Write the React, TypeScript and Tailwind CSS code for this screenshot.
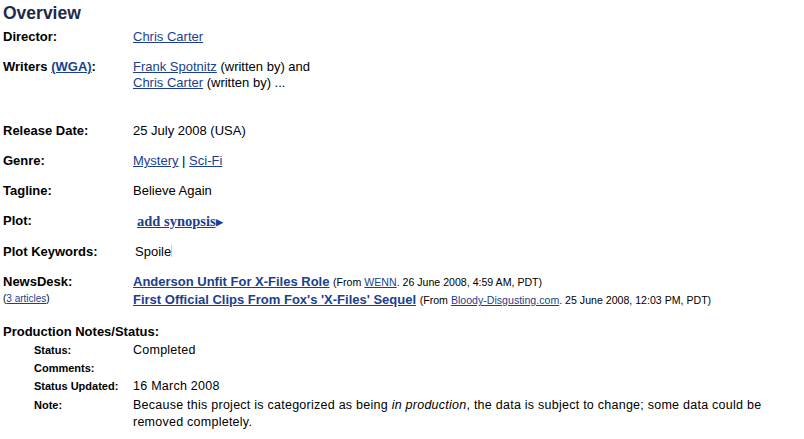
import React from 'react';

const link = 'text-[#1a3f8f] underline';

function Row({
	label,
	children,
	className = '',
}: {
	label: React.ReactNode;
	children?: React.ReactNode;
	className?: string;
}) {
	return (
		<div className={`flex leading-[16px] ${className}`}>
			<div className="w-[130px] shrink-0 font-bold">{label}</div>
			<div className="flex-1">{children}</div>
		</div>
	);
}

function SubRow({
	label,
	children,
	className = '',
}: {
	label: string;
	children?: React.ReactNode;
	className?: string;
}) {
	return (
		<div className={`flex leading-[17px] ${className}`}>
			<div className="w-[130px] shrink-0 pl-[31px] text-[11px] font-bold">
				{label}
			</div>
			<div className="w-[645px] text-[12.5px] tracking-[0.25px]">{children}</div>
		</div>
	);
}

export default function App() {
	return (
		<div className="min-h-screen bg-white pl-[3px] pt-[3px] font-['Liberation_Sans',Arial,sans-serif] text-[13px] text-black">
			<h2 className="text-[17.5px] font-bold leading-[21px] text-[#1f2a48]">
				Overview
			</h2>

			<Row label="Director:" className="mt-[5px]">
				<a className={link}>Chris Carter</a>
			</Row>

			<Row
				label={
					<>
						Writers <a className={link}>(WGA)</a>:
					</>
				}
				className="mt-[14px]"
			>
				<a className={link}>Frank Spotnitz</a> (written by) and
				<br />
				<a className={link}>Chris Carter</a> (written by) ...
			</Row>

			<Row label="Release Date:" className="mt-[32px]">
				25 July 2008 (USA)
			</Row>

			<Row label="Genre:" className="mt-[14px]">
				<a className={link}>Mystery</a> | <a className={link}>Sci-Fi</a>
			</Row>

			<Row label="Tagline:" className="mt-[14px]">
				Believe Again
			</Row>

			<Row label="Plot:" className="mt-[14px]">
				<span className="ml-[4px] font-['Liberation_Serif',serif] text-[14.5px] font-bold text-[#1a3f8f]">
					<a className="underline">add synopsis</a>
					<span className="text-[9px] align-[1px]">▶</span>
				</span>
			</Row>

			<Row label="Plot Keywords:" className="mt-[14px]">
				<span className="ml-[2px]">Spoile</span>
				<span className="inline-block h-[12px] w-px align-[-1px] bg-[#ccc]" />
			</Row>

			<div className="mt-[13px] flex leading-[17px]">
				<div className="w-[130px] shrink-0">
					<div className="font-bold">NewsDesk:</div>
					<div className="text-[10px]">
						(<a className={link}>3 articles</a>)
					</div>
				</div>
				<div className="flex-1">
					<div>
						<a className={`${link} font-bold`}>Anderson Unfit For X-Files Role</a>{' '}
						<span className="text-[10.6px]">
							(From <a className={link}>WENN</a>. 26 June 2008, 4:59 AM, PDT)
						</span>
					</div>
					<div>
						<a className={`${link} font-bold`}>
							First Official Clips From Fox's 'X-Files' Sequel
						</a>{' '}
						<span className="text-[10.6px]">
							(From <a className={link}>Bloody-Disgusting.com</a>. 25 June 2008,
							12:03 PM, PDT)
						</span>
					</div>
				</div>
			</div>

			<div className="mt-[15px] font-bold leading-[16px]">
				Production Notes/Status:
			</div>
			<div className="mt-[2px] flex flex-col gap-[1px]">
				<SubRow label="Status:">Completed</SubRow>
				<SubRow label="Comments:" />
				<SubRow label="Status Updated:">16 March 2008</SubRow>
				<SubRow label="Note:" className="mt-[1px]">
					Because this project is categorized as being <i>in production</i>,
					the data is subject to change; some data could be removed
					completely.
				</SubRow>
			</div>
		</div>
	);
}
